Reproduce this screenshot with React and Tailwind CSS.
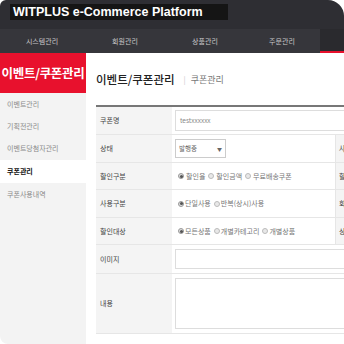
import React from "react";

const font = { fontFamily: '"Noto Sans CJK KR", "Noto Sans", sans-serif' };

const navItems = [
  { label: "시스템관리", w: "w-[84px]" },
  { label: "회원관리", w: "w-[82px]" },
  { label: "상품관리", w: "w-[78px]" },
  { label: "주문관리", w: "w-[76px]" },
];

const sideItems = [
  { label: "이벤트관리", h: "h-[22px]" },
  { label: "기획전관리", h: "h-[22px]" },
  { label: "이벤트당첨자관리", h: "h-[23px]" },
  { label: "쿠폰관리", h: "h-[23px]", active: true },
  { label: "쿠폰사용내역", h: "h-[23px]" },
];

const Radio = ({ checked }) => (
  <span
    className={
      "inline-flex items-center justify-center w-[6px] h-[6px] rounded-full border " +
      (checked ? "border-[#999] bg-[#ddd]" : "border-[#bbb] bg-[#e8e8e8]")
    }
  >
    {checked && <span className="w-[3px] h-[3px] rounded-full bg-[#555]" />}
  </span>
);

const RadioGroup = ({ items, gap = "gap-[2px]" }) => (
  <div className="flex items-center gap-[3px] pl-[3px] text-[7px] text-[#777]">
    {items.map((it, i) => (
      <span key={it} className={"flex items-center " + gap}>
        <Radio checked={i === 0} />
        {it}
      </span>
    ))}
  </div>
);

const Row = ({ label, h, children, side }) => (
  <div className={"flex border-b border-[#e6e6e6] " + h}>
    <div className="w-[76px] shrink-0 bg-[#f4f4f4] flex items-center pl-[4px] text-[7px] text-[#444]">
      {label}
    </div>
    {side !== undefined ? (
      <>
        <div className="w-[163px] shrink-0 flex items-center px-[3px]">{children}</div>
        <div className="flex-1 bg-[#f4f4f4] border-l border-[#e6e6e6] flex items-center pl-[3px] text-[7px] text-[#444]">
          {side}
        </div>
      </>
    ) : (
      <div className="flex-1 flex items-center px-[3px]">{children}</div>
    )}
  </div>
);

export default function App() {
  return (
    <div className="w-[344px] h-[344px] bg-white overflow-hidden" style={font}>
      <div className="w-[344px] h-[344px] overflow-hidden rounded-tl-md rounded-tr-2xl rounded-bl-lg flex flex-col bg-white">
        <div className="h-[29px] bg-[#2e2e33] flex items-start pt-[4px] pl-[10px] shrink-0">
          <div
            className="h-[16px] w-[218px] bg-[#151515] flex items-center pl-[3px] text-white text-[12.5px] font-bold leading-none whitespace-nowrap"
            style={{ fontFamily: '"Liberation Sans", Arial, sans-serif' }}
          >
            WITPLUS e-Commerce Platform
          </div>
        </div>
        <div className="h-[24px] bg-[#36363b] flex shrink-0">
          {navItems.map((n) => (
            <div
              key={n.label}
              className={n.w + " flex items-center justify-center text-[7px] text-[#c8c8c8]"}
            >
              {n.label}
            </div>
          ))}
          <div className="flex-1 bg-[#2a2a2e] border-b-2 border-[#e8112d]" />
        </div>
        <div className="flex flex-1 min-h-0">
          <div className="w-[86px] shrink-0 bg-[#f3f3f3] flex flex-col">
            <div className="h-[40px] bg-[#e8112d] flex items-center justify-center text-white text-[12.5px] font-bold whitespace-nowrap tracking-tight">
              이벤트/쿠폰관리
            </div>
            {sideItems.map((s) => (
              <div
                key={s.label}
                className={
                  s.h +
                  " flex items-center pl-[7px] text-[7px] " +
                  (s.active ? "bg-white text-[#111] font-bold" : "text-[#8a8a8a]")
                }
              >
                {s.label}
              </div>
            ))}
          </div>
          <div className="flex-1 min-w-0 pl-[10px] flex flex-col">
            <div className="h-[52px] flex items-center pt-[2px] whitespace-nowrap">
              <span className="text-[11.5px] font-medium text-[#222]">이벤트/쿠폰관리</span>
              <span className="text-[8px] text-[#ccc] ml-[9px]">|</span>
              <span className="text-[9px] text-[#777] ml-[5px]">쿠폰관리</span>
            </div>
            <div className="w-[300px] border-t-2 border-[#777]">
              <Row label="쿠폰명" h="h-[28px]">
                <div className="w-full h-[21px] border border-[#ddd] flex items-center pl-[4px] text-[6.5px] text-[#888]">
                  testxxxxxx
                </div>
              </Row>
              <Row label="상태" h="h-[28px]" side="사">
                <div className="w-[51px] h-[19px] border border-[#ccc] flex items-center justify-between px-[3px] text-[6.5px] text-[#666]">
                  <span>발행중</span>
                  <span className="text-[5px]">▼</span>
                </div>
              </Row>
              <Row label="할인구분" h="h-[27px]" side="할">
                <RadioGroup items={["할인율", "할인금액", "무료배송쿠폰"]} />
              </Row>
              <Row label="사용구분" h="h-[28px]" side="회">
                <RadioGroup items={["단일사용", "반복(상시)사용"]} gap="gap-[1px]" />
              </Row>
              <Row label="할인대상" h="h-[27px]" side="상">
                <RadioGroup items={["모든상품", "개별카테고리", "개별상품"]} gap="gap-[1px]" />
              </Row>
              <Row label="이미지" h="h-[29px]">
                <div className="w-full h-[20px] border border-[#ddd]" />
              </Row>
              <Row label="내용" h="h-[60px]">
                <div className="w-full h-[51px] border border-[#ddd]" />
              </Row>
            </div>
          </div>
        </div>
      </div>
    </div>
  );
}
